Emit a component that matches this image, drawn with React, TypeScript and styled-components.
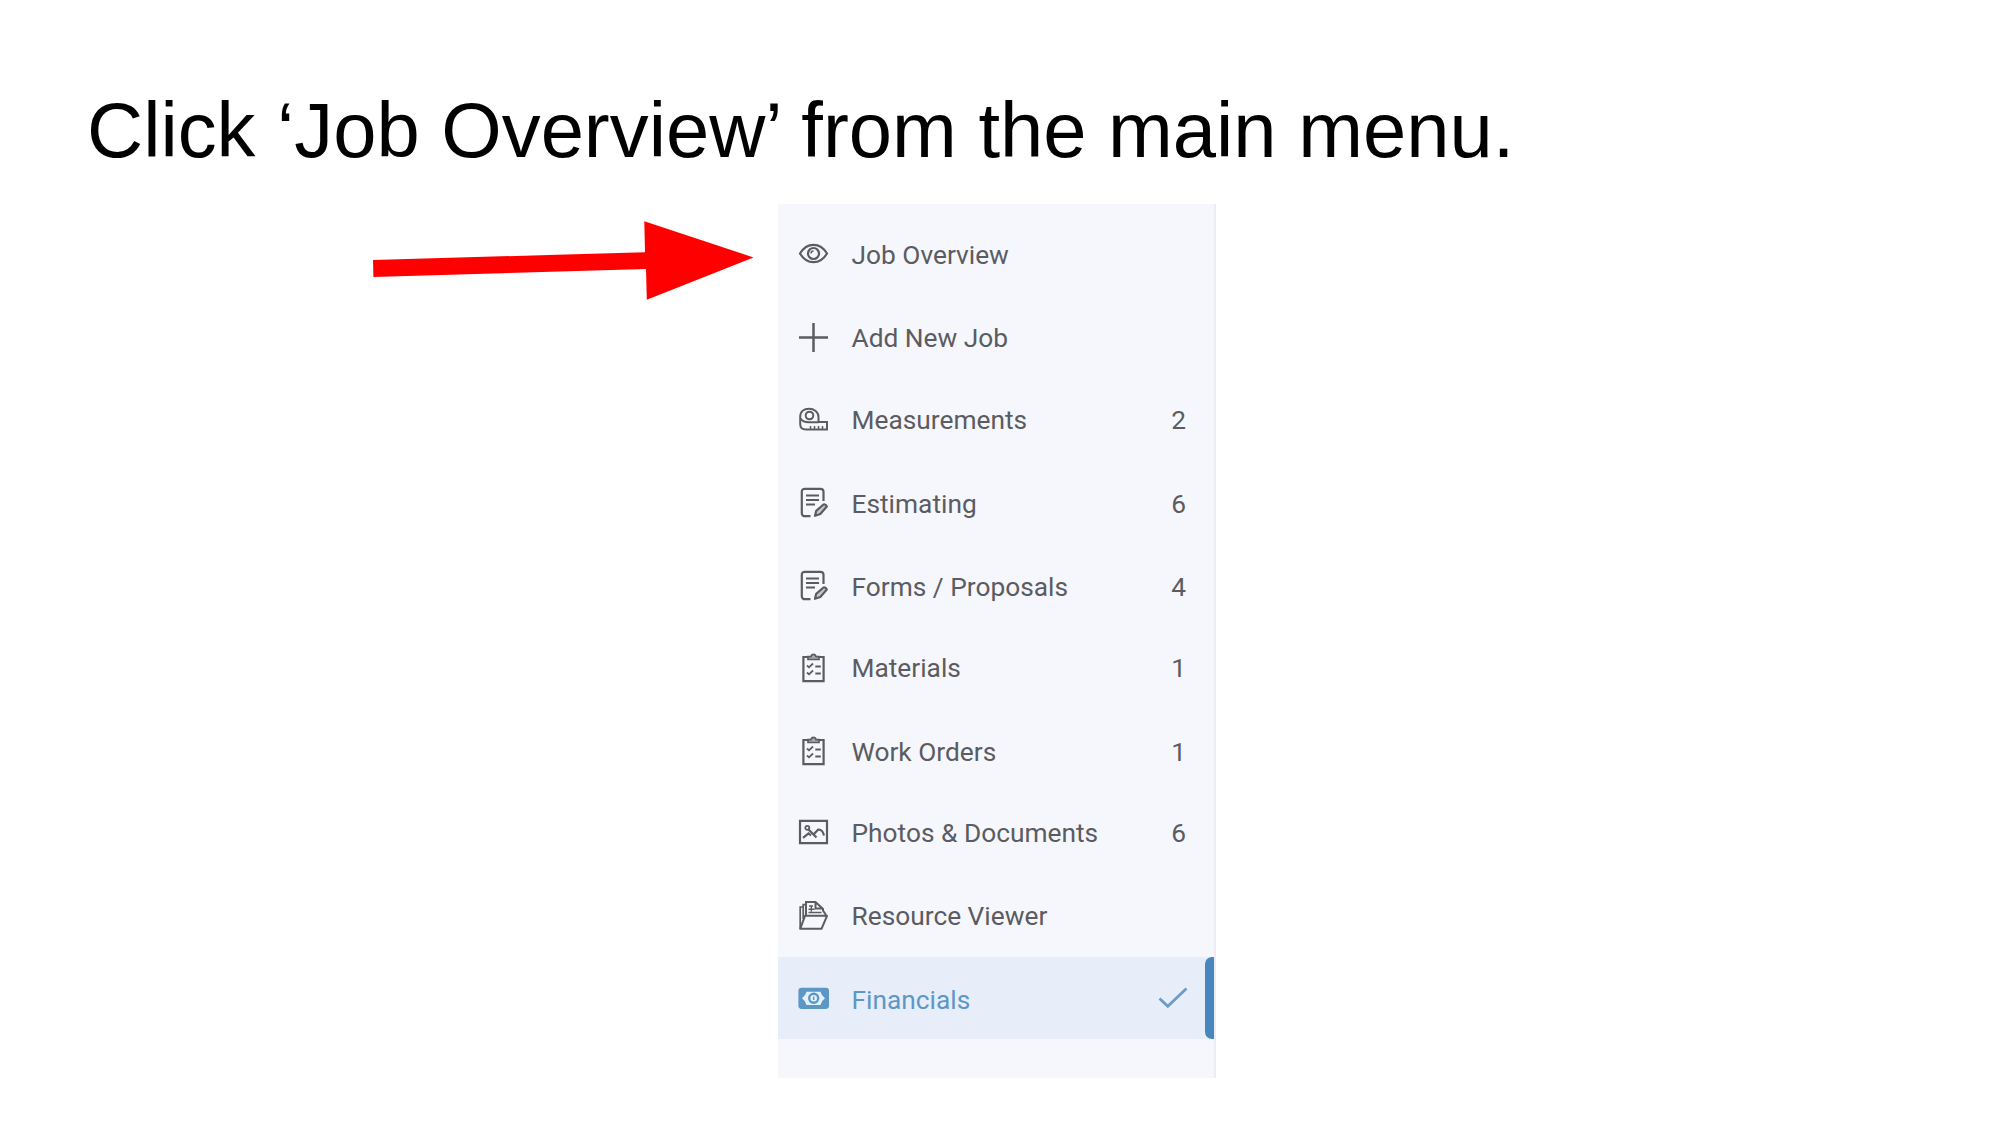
import React from "react";
import styled, { createGlobalStyle } from "styled-components";

const GlobalStyle = createGlobalStyle`
  body { margin: 0; background: #fff; }
  * { box-sizing: border-box; }
`;

const Slide = styled.main`
  width: 2000px;
  height: 1125px;
  display: flex;
  flex-direction: column;
  background: #fff;
  overflow: hidden;
`;

const Title = styled.h1`
  margin: 0;
  padding: 85px 0 0 87px;
  height: 204px;
  font: 400 77.75px/90px "Liberation Sans", Arial, sans-serif;
  color: #000;
  white-space: nowrap;
`;

const Content = styled.section`
  display: flex;
  align-items: flex-start;
  gap: 24px;
  padding-left: 372px;
`;

const Arrow = styled.svg`
  display: block;
  flex: none;
  margin-top: 16px;
`;

const Menu = styled.nav`
  width: 438px;
  height: 873.5px;
  padding-top: 8.5px;
  background: #f6f7fd;
  border-right: 2px solid #ececf2;
  font-family: Roboto, sans-serif;
`;

const Item = styled.div<{ $active?: boolean }>`
  display: flex;
  align-items: center;
  height: ${(p) => (p.$active ? 81.5 : 82.75)}px;
  padding-left: 20px;
  color: ${(p) => (p.$active ? "#5c97c6" : "#5b5c61")};
  background: ${(p) => (p.$active ? "#e7eef9" : "transparent")};
`;

const Entry = styled.div<{ $nudge: number }>`
  display: flex;
  flex: 1;
  align-items: center;
  height: 100%;
  padding-top: ${(p) => Math.max(0, p.$nudge * 2)}px;
  padding-bottom: ${(p) => Math.max(0, -p.$nudge * 2)}px;
`;

const Icon = styled.svg<{ $weight?: number }>`
  width: 31px;
  height: 31px;
  flex: none;
  fill: none;
  stroke: currentColor;
  stroke-width: ${(p) => p.$weight ?? 2.2};
`;

const Label = styled.span`
  flex: 1;
  margin-left: 22.5px;
  padding-top: 2px;
  font-size: 26.3px;
  line-height: 32px;
  white-space: nowrap;
`;

const Count = styled.span`
  width: 40px;
  padding-top: 2px;
  margin-right: 28px;
  text-align: right;
  font-size: 26.3px;
  line-height: 32px;
`;

const Check = styled.svg`
  width: 30px;
  height: 24px;
  margin-right: 17px;
  fill: none;
  stroke: #6d9cc4;
  stroke-width: 2.8;
`;

const ActiveBar = styled.span`
  width: 9px;
  height: 100%;
  border-radius: 7px 0 0 7px;
  background: #4787bc;
`;

const Eye = () => (
  <Icon viewBox="0 0 31 31">
    <path d="M2 15.500C5.500 9.500 10 6.800 15.500 6.800S25.500 9.500 29 15.500C25.500 21.500 21 24.200 15.500 24.200S5.500 21.500 2 15.500Z" />
    <circle cx="15.500" cy="15.500" r="5.500" />
    <path d="M13 15.500c0-1.500 1-2.500 2.500-2.500" strokeWidth="1.400" />
  </Icon>
);

const Plus = () => (
  <Icon viewBox="0 0 31 31" $weight={2.5}>
    <path d="M15.500 1v29M1 15.500h29" />
  </Icon>
);

const Tape = () => (
  <Icon viewBox="0 0 31 31" $weight={2}>
    <path d="M2.200 13C2.200 7.500 6 4.800 11 4.800S20.500 8 20.500 13v5H29v7.500H8C4.500 25.500 2.200 23.500 2.200 20Z" />
    <path d="M2.500 14.500C4 17 7 18.200 11 18.200h9.500" />
    <circle cx="11.500" cy="11.500" r="3.800" />
    <path d="M12.500 25v-3M16.500 25v-3M20.500 25v-3M24.500 25v-3" strokeWidth="1.500" />
  </Icon>
);

const Form = () => (
  <Icon viewBox="0 0 31 31">
    <path d="M12.500 29.200H7c-2 0-3.200-1.200-3.200-3.200V4.800C3.800 2.800 5 1.800 7 1.800h15.500c2 0 3 1 3 3V14" />
    <path d="M8 8.500h13M8 13h13M8 17.500h9" strokeWidth="1.800" />
    <path d="M17 28.800l1.200-5 7.300-6.300q2.200-.5 3.300 2l-6.500 7.500Z" fill="currentColor" fillOpacity=".3" strokeLinejoin="round" />
  </Icon>
);

const Clipboard = () => (
  <Icon viewBox="0 0 31 31">
    <path d="M10 5H5.400v24.200h20.200V5H21" />
    <path d="M10 7.500V4.600h3c.6-3 4.400-3 5 0h3v2.900Z" fill="currentColor" fillOpacity=".5" strokeWidth="1.700" />
    <path d="M9 13.500l2 1.800 4-3.800M9 20.500l2 1.800 4-3.800" strokeWidth="1.800" />
    <path d="M17.300 14.500h5.500M17.300 21.500h5.500" strokeWidth="1.800" />
  </Icon>
);

const Photo = () => (
  <Icon viewBox="0 0 31 31">
    <path d="M2 3.800h27v22.400H2Z" />
    <circle cx="9.300" cy="10.800" r="2" strokeWidth="1.800" />
    <path d="M5 20.800l5.500-4.300 2.500 2M10.500 12.500l8 8M15.500 17.500l4.500-4.800c3-.6 5.300 2.300 6 5.800" />
  </Icon>
);

const Folder = () => (
  <Icon viewBox="0 0 31 31" $weight={2}>
    <path d="M2.200 28.800h21.300L29 15.800H7L2.200 28.800Z" strokeLinejoin="round" />
    <path d="M2.200 28.800V7h3V4.600h2.500M5.200 7v12" strokeWidth="1.700" />
    <path d="M8 15.500V2h9.500l7.500 7v1.500l3 4.500M17.500 2.500v6H25" />
    <path d="M11 6h4M10.500 9.200h6M10.500 12.500h13M13.300 5.500v6" strokeWidth="1.400" />
  </Icon>
);

const Money = () => (
  <Icon viewBox="0 0 31 31">
    <rect x="1.500" y="5.800" width="28.500" height="19" rx="2" fill="currentColor" />
    <path d="M4 15.300q3.500-2.500 4.500-6.600h14q1 4.100 4.500 6.600-3.500 2.500-4.500 6.600h-14Q7.500 17.800 4 15.300Z" fill="#e2f1fd" stroke="none" />
    <circle cx="15.700" cy="15.300" r="4.500" strokeWidth="2.400" />
    <path d="M15.700 13.500v3.600" strokeWidth="1.400" />
  </Icon>
);

const items: { label: string; icon: React.FC; nudge: number; count?: number; active?: boolean }[] = [
  { label: "Job Overview", icon: Eye, nudge: 0 },
  { label: "Add New Job", icon: Plus, nudge: 0.6 },
  { label: "Measurements", icon: Tape, nudge: 0, count: 2 },
  { label: "Estimating", icon: Form, nudge: 0.4, count: 6 },
  { label: "Forms / Proposals", icon: Form, nudge: 1, count: 4 },
  { label: "Materials", icon: Clipboard, nudge: -0.4, count: 1 },
  { label: "Work Orders", icon: Clipboard, nudge: 0.5, count: 1 },
  { label: "Photos & Documents", icon: Photo, nudge: -1, count: 6 },
  { label: "Resource Viewer", icon: Folder, nudge: -0.8 },
  { label: "Financials", icon: Money, nudge: 0.8, active: true },
];

export default function App() {
  return (
    <>
      <GlobalStyle />
      <Slide>
        <Title>Click ‘Job Overview’ from the main menu.</Title>
        <Content>
          <Arrow width="382" height="82" viewBox="372 220 382 82">
            <path d="M373 260L645 252.200L644.300 221.300L753.500 257.400L646.800 299.800L646 269L373.400 277Z" fill="#f00" />
          </Arrow>
          <Menu>
            {items.map(({ label, icon: Glyph, nudge, count, active }) => (
              <Item key={label} $active={active}>
                <Entry $nudge={nudge}>
                  <Glyph />
                  <Label>{label}</Label>
                  {count !== undefined && <Count>{count}</Count>}
                </Entry>
                {active && (
                  <>
                    <Check viewBox="0 0 30 24">
                      <path d="M1.500 12.500l8.300 7.800L28.500 2.500" />
                    </Check>
                    <ActiveBar />
                  </>
                )}
              </Item>
            ))}
          </Menu>
        </Content>
      </Slide>
    </>
  );
}
